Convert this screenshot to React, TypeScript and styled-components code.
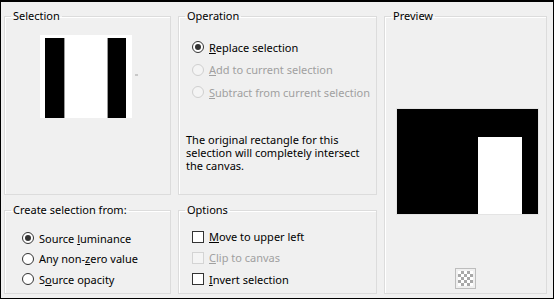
import styled, { createGlobalStyle } from "styled-components";

const Global = createGlobalStyle`
  html, body {
    margin: 0;
    padding: 0;
    background: #f0f0f0;
  }
`

const Dialog = styled.div`
  box-sizing: border-box;
  width: 554px;
  height: 299px;
  border: 1px solid #000;
  border-top-width: 2px;
  background: #f0f0f0;
  padding: 6px 0 0 3px;
  display: grid;
  grid-template-columns: 167px 199px 163px;
  grid-template-rows: 187px 92px;
  column-gap: 7px;
  row-gap: 7px;
  font-family: "Segoe UI", "Noto Sans", sans-serif;
  font-size: 11px;
  color: #000;
`

const Group = styled.fieldset<{ $col: number; $row: string }>`
  margin: 0;
  padding: 0;
  min-width: 0;
  border: 1px solid #dcdcdc;
  box-shadow: inset 1px 1px 0 #fff;
  grid-column: ${p => p.$col};
  grid-row: ${p => p.$row};
  display: flex;
  flex-direction: column;
`

const Title = styled.legend`
  margin-left: 6px;
  padding: 0 2px;
  line-height: 16px;
`

const ThumbArea = styled.div`
  display: flex;
  align-items: center;
  margin: 11px 0 0 35px;
`

const Thumb = styled.div`
  display: flex;
  background: #fff;
  padding: 3px 6px 0 5px;
  height: 80px;
`

const Bar = styled.div<{ $w: number; $black?: boolean }>`
  width: ${p => p.$w}px;
  background: ${p => (p.$black ? "#000" : "#fff")};
  border-left: ${p => (p.$black ? "none" : "1px solid #9a9a9a")};
  border-right: ${p => (p.$black ? "none" : "1px solid #9a9a9a")};
`

const DropArrow = styled.div`
  width: 3px;
  height: 2px;
  margin-left: 3px;
  margin-top: -4px;
  background: #c8c8c8;
`

const List = styled.div<{ $top: number; $left: number; $gap: number }>`
  display: flex;
  flex-direction: column;
  gap: ${p => p.$gap}px;
  margin: ${p => p.$top}px 0 0 ${p => p.$left}px;
`

const Row = styled.label<{ $disabled?: boolean }>`
  display: flex;
  align-items: center;
  gap: 5px;
  height: 16px;
  color: ${p => (p.$disabled ? "#a0a0a0" : "#000")};
  white-space: nowrap;
`

const Radio = styled.span<{ $checked?: boolean; $disabled?: boolean }>`
  box-sizing: border-box;
  flex-shrink: 0;
  width: 12px;
  height: 12px;
  border-radius: 50%;
  border: 1px solid ${p => (p.$disabled ? "#cfcfcf" : "#333")};
  background: ${p => (p.$disabled ? "#f4f4f4" : "#fff")};
  display: flex;
  align-items: center;
  justify-content: center;

  &::after {
    content: "";
    width: 6px;
    height: 6px;
    border-radius: 50%;
    background: #333;
    display: ${p => (p.$checked ? "block" : "none")};
  }
`

const Check = styled.span<{ $disabled?: boolean }>`
  box-sizing: border-box;
  flex-shrink: 0;
  width: 12px;
  height: 12px;
  border: 1px solid ${p => (p.$disabled ? "#d4d4d4" : "#333")};
  background: ${p => (p.$disabled ? "#f4f4f4" : "#fff")};
`

const Note = styled.p`
  margin: 33px 0 0 7px;
  line-height: 13px;
  white-space: nowrap;
`

const PreviewCanvas = styled.div`
  display: flex;
  align-items: flex-end;
  justify-content: flex-end;
  width: 141px;
  height: 105px;
  margin-top: 85px;
  margin-left: 12px;
  background: #000;
  outline: 1px solid #e4e4e4;
`

const PreviewSel = styled.div`
  width: 44px;
  height: 77px;
  margin-right: 16px;
  background: #fff;
`

const Checker = styled.div`
  box-sizing: border-box;
  align-self: center;
  width: 21px;
  height: 21px;
  margin-top: 54px;
  border: 1px solid #bdbdbd;
  padding: 2px;
  background-clip: content-box;
  background-color: #fff;
  background-image:
    linear-gradient(45deg, #a8a8a8 25%, transparent 25%, transparent 75%, #a8a8a8 75%),
    linear-gradient(45deg, #a8a8a8 25%, transparent 25%, transparent 75%, #a8a8a8 75%);
  background-size: 6px 6px;
  background-position: 2px 2px, 5px 5px;
`

const App = () => (
  <>
    <Global />
    <Dialog>
      <Group $col={1} $row="1">
        <Title>Selection</Title>
        <ThumbArea>
          <Thumb>
            <Bar $w={19} $black />
            <Bar $w={42} />
            <Bar $w={18} $black />
          </Thumb>
          <DropArrow />
        </ThumbArea>
      </Group>

      <Group $col={2} $row="1">
        <Title>Operation</Title>
        <List $top={15} $left={13} $gap={6.5}>
          <Row><Radio $checked /><span><u>R</u>eplace selection</span></Row>
          <Row $disabled><Radio $disabled /><span><u>A</u>dd to current selection</span></Row>
          <Row $disabled><Radio $disabled /><span><u>S</u>ubtract from current selection</span></Row>
        </List>
        <Note>
          The original rectangle for this
          <br />
          selection will completely intersect
          <br />
          the canvas.
        </Note>
      </Group>

      <Group $col={3} $row="1 / span 2">
        <Title>Preview</Title>
        <PreviewCanvas>
          <PreviewSel />
        </PreviewCanvas>
        <Checker />
      </Group>

      <Group $col={1} $row="2">
        <Title>Create selection from:</Title>
        <List $top={12} $left={17} $gap={4.5}>
          <Row><Radio $checked /><span>Source <u>l</u>uminance</span></Row>
          <Row><Radio /><span>Any non-<u>z</u>ero value</span></Row>
          <Row><Radio /><span>S<u>o</u>urce opacity</span></Row>
        </List>
      </Group>

      <Group $col={2} $row="2">
        <Title>Options</Title>
        <List $top={10.5} $left={13} $gap={5.25}>
          <Row><Check /><span><u>M</u>ove to upper left</span></Row>
          <Row $disabled><Check $disabled /><span><u>C</u>lip to canvas</span></Row>
          <Row><Check /><span><u>I</u>nvert selection</span></Row>
        </List>
      </Group>
    </Dialog>
  </>
)

export default App
